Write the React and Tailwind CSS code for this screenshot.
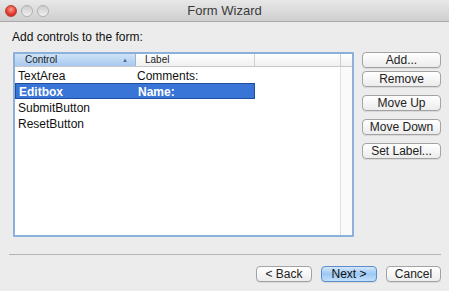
const rows = [
  { control: "TextArea", label: "Comments:" },
  { control: "Editbox", label: "Name:", selected: true },
  { control: "SubmitButton", label: "" },
  { control: "ResetButton", label: "" },
];

const sideButtons = [
  { text: "Add...", mt: "mt-0" },
  { text: "Remove", mt: "mt-[3px]" },
  { text: "Move Up", mt: "mt-[8px]" },
  { text: "Move Down", mt: "mt-[8px]" },
  { text: "Set Label...", mt: "mt-[8px]" },
];

const Button = ({ children, primary, className = "" }) => (
  <button
    className={
      "h-[16px] rounded-[4px] border text-[12px] leading-none flex items-center justify-center shadow-[0_1px_0_rgba(0,0,0,0.08)] " +
      (primary
        ? "border-[#5b8ec9] bg-gradient-to-b from-[#d4e6fa] via-[#9cc8f2] to-[#c3e0fb] text-[#111]"
        : "border-[#a3a3a3] bg-gradient-to-b from-white to-[#ececec] text-[#222]") +
      " " +
      className
    }
  >
    {children}
  </button>
);

const App = () => {
  return (
    <div
      className="w-[449px] h-[291px] bg-[#ececec] flex flex-col overflow-hidden"
      style={{ fontFamily: '"Lucida Grande", "Liberation Sans", sans-serif' }}
    >
      {/* Title bar */}
      <div className="h-[22px] relative flex items-center justify-center bg-gradient-to-b from-[#e8e8e8] to-[#cfcfcf] border-b border-[#a9a9a9]">
        <div className="absolute left-[5px] top-[5px] flex gap-[4px]">
          <span className="w-[12px] h-[12px] rounded-full bg-[radial-gradient(circle_at_50%_35%,#ff9a8f,#e0362a_60%,#b01e14)] border border-[#b5443b]" />
          <span className="w-[12px] h-[12px] rounded-full bg-gradient-to-b from-[#cdcdcd] to-[#f0f0f0] border border-[#b0b0b0]" />
          <span className="w-[12px] h-[12px] rounded-full bg-gradient-to-b from-[#cdcdcd] to-[#f0f0f0] border border-[#b0b0b0]" />
        </div>
        <span className="text-[13px] text-[#3a3a3a] pt-[1px]">Form Wizard</span>
      </div>

      {/* Body */}
      <div className="flex-1 flex flex-col pl-[12px] pr-[8px]">
        <div className="text-[12px] text-[#111] mt-[8px] h-[15px] leading-[15px]">
          Add controls to the form:
        </div>

        <div className="flex mt-[7px]">
          {/* Table */}
          <div className="ml-[1px] w-[341px] shrink-0 h-[185px] border-2 border-[#8cb0dc] bg-white flex flex-col rounded-[1px]">
            <div className="h-[13px] flex text-[10px] leading-[12px] text-[#222] border-b border-[#c8c8c8] bg-gradient-to-b from-white to-[#f0f0f0]">
              <div className="w-[121px] pl-[10px] flex items-center justify-between pr-[7px] bg-gradient-to-b from-[#cfe3f8] to-[#a8c9ee] border-r border-[#9fb6d2]">
                <span>Control</span>
                <span className="text-[6px] text-[#4a6b96]">▲</span>
              </div>
              <div className="w-[119px] pl-[9px] flex items-center border-r border-[#cfcfcf]">Label</div>
              <div className="flex-1 border-r border-[#cfcfcf]" />
              <div className="w-[11px]" />
            </div>
            <div className="flex-1 flex">
              <div className="flex-1 flex flex-col">
                {rows.map((r) => (
                  <div
                    key={r.control}
                    className={
                      "h-[16px] w-[240px] flex items-center text-[12px] pt-[1px] " +
                      (r.selected
                        ? "bg-[#3875d7] text-white font-bold border border-[#1d4f9e]"
                        : "text-[#111]")
                    }
                  >
                    <span className="w-[121px] pl-[3px]">{r.control}</span>
                    <span className="pl-[1px]">{r.label}</span>
                  </div>
                ))}
              </div>
              <div className="w-[12px] border-l border-[#e0e0e0] bg-[#fafafa]" />
            </div>
          </div>

          {/* Side buttons */}
          <div className="ml-[8px] flex flex-col w-[79px] shrink-0">
            {sideButtons.map((b) => (
              <Button key={b.text} className={"w-[79px] " + b.mt}>
                {b.text}
              </Button>
            ))}
          </div>
        </div>

        <div className="mt-[17px] ml-[-3px] border-t border-[#b4b4b4]" />

        <div className="flex justify-end gap-[9px] mt-[11px]">
          <Button className="w-[56px]">&lt; Back</Button>
          <Button primary className="w-[56px]">Next &gt;</Button>
          <Button className="w-[55px]">Cancel</Button>
        </div>
      </div>
    </div>
  );
};

export default App;
